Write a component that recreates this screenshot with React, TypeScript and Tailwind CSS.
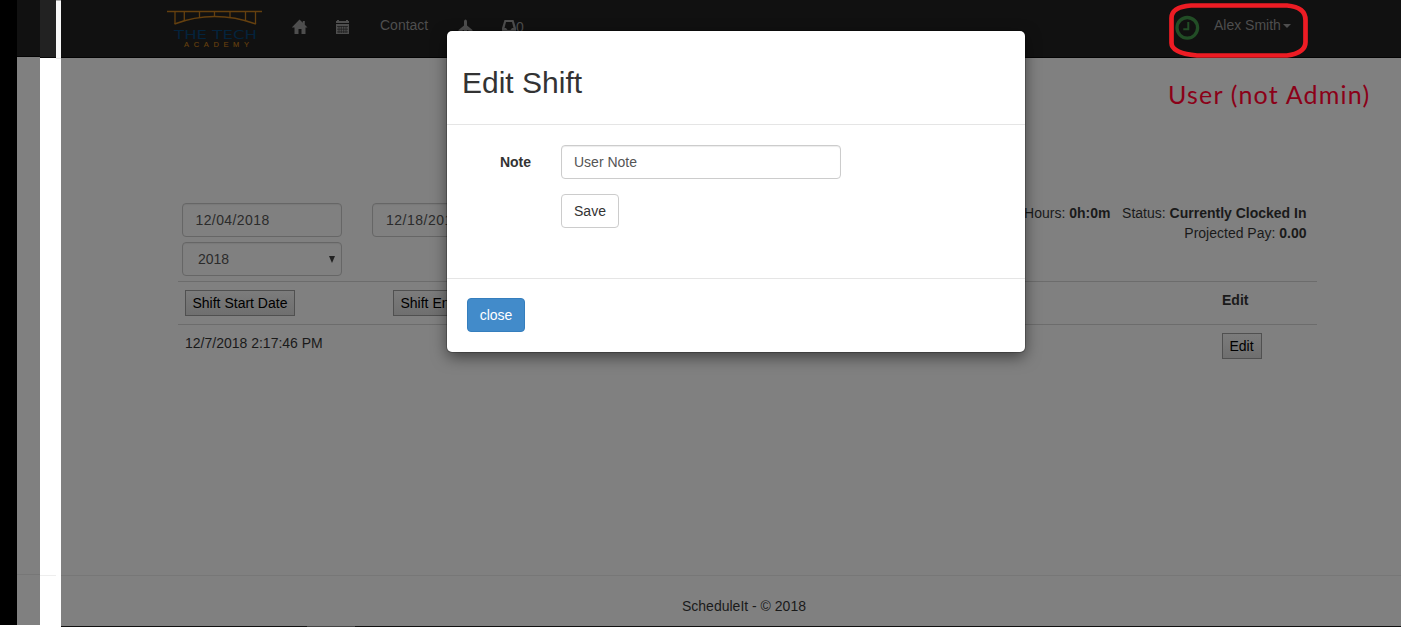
import React from "react";

function Logo() {
  return (
    <svg className="block h-[40px] w-[96px]" viewBox="0 0 96 40">
      <g fill="none" stroke="#65400f" strokeWidth="1.3">
        <path d="M0 3.500H95" strokeWidth="1.6" />
        <path d="M8 4v12M88.500 4v12M17.300 4v8.500M32.500 4v5.500M47.500 4v4.500M63 4v5.500M78.500 4v8.500" />
        <path d="M7.500 16Q47 1 89 16" strokeWidth="1.5" />
      </g>
      <text x="7" y="30.500" textLength="83" lengthAdjust="spacingAndGlyphs" fontFamily="DejaVu Sans, sans-serif" fontSize="13" fill="#04233c">THE TECH</text>
      <text x="17" y="39" textLength="65" fontFamily="Liberation Sans, sans-serif" fontSize="7.500" fill="#65400f" stroke="#65400f" strokeWidth=".15">ACADEMY</text>
    </svg>
  );
}

function HomeIcon() {
  return (
    <svg className="h-4 w-4" viewBox="0 0 16 16" fill="#4e4e4e">
      <path d="M7.500.5 10.800 3.800V2h2v3.800L15.500 8.500h-2V15H9.500v-5h-3v5H2.500V8.500H-.3z" />
    </svg>
  );
}

function CalendarIcon() {
  return (
    <svg className="h-4 w-4" viewBox="0 0 16 16">
      <path fill="#4e4e4e" d="M1 2h1V1h2v1h7V1h2v1h1v2H1zM1 5h13v10H1z" />
      <path stroke="#1b1b1b" strokeWidth=".7" d="M2 7.500h11M2 10.200h11M2 12.900h11M4 7v7M6.300 7v7M8.700 7v7M11 7v7" />
    </svg>
  );
}

function PlaneIcon() {
  return (
    <svg className="h-4 w-4" viewBox="0 0 16 16" fill="#4e4e4e">
      <path d="M6 6.500V2.500Q6.200.5 7.500.5T9 2.500v4l5.500 4.500v2.500L9 11v2.500l2.500 2h-8l2.500-2V11L.5 13.500V11z" />
    </svg>
  );
}

function InboxIcon() {
  return (
    <svg className="h-4 w-[14px]" viewBox="0 0 14 16" fill="#4e4e4e">
      <path fillRule="evenodd" d="M2.500 1h9L14 9v6H0V9zM4 3 2.500 9H4l1.500 2h3L10 9h1.500L10 3z" />
    </svg>
  );
}

function ClockIcon() {
  return (
    <svg className="h-[26px] w-[26px]" viewBox="0 0 26 26" fill="none" stroke="#224d26">
      <circle cx="13.300" cy="12.800" r="10.300" strokeWidth="3.300" />
      <path d="M14.300 7v7.200H9.300" strokeWidth="2" />
    </svg>
  );
}

function Navbar() {
  return (
    <header className="flex h-[58px] shrink-0 border-b border-[#040404] bg-[#111] pl-[106px] text-[#4e4e4e]">
      <div className="w-[125px] pt-2"><Logo /></div>
      <div className="w-[43px] pt-[19px]"><HomeIcon /></div>
      <div className="w-[45px] pt-[19px]"><CalendarIcon /></div>
      <div className="w-[78px] pt-[15px] leading-5">Contact</div>
      <div className="w-[44px] pt-[19px]"><PlaneIcon /></div>
      <div className="flex w-[672px] pt-[19px] leading-4"><InboxIcon />0</div>
      <div className="w-[40px] pt-[15px]"><ClockIcon /></div>
      <div className="flex pt-[15px] leading-5">
        Alex Smith
        <span className="mt-[9px] ml-[2px] h-0 w-0 border-x-4 border-t-4 border-x-transparent border-t-[#4e4e4e]" />
      </div>
    </header>
  );
}

const field = "flex h-[34px] w-[160px] items-center rounded border border-[#666] text-[#2b2b2b] shadow-[inset_0_1px_1px_rgba(0,0,0,0.06)]";
const gridButton = "h-[26px] border border-[#505050] bg-linear-to-b from-[#7c7c7c] to-[#6f6f6f] px-[6.5px] leading-6 text-black";

function Filters() {
  return (
    <section className="flex h-[78px] pl-1">
      <div className="flex w-[190px] flex-col gap-[5px]">
        <div className={field + " pl-[12.5px] tracking-[0.4px]"}>12/04/2018</div>
        <div className={field + " justify-between pr-[6px] pl-[15px]"}>
          <span>2018</span>
          <svg className="h-[7px] w-[6px]" viewBox="0 0 6 7"><path d="M0 0h6L3 7z" fill="#222" /></svg>
        </div>
      </div>
      <div className={field + " pl-[13px] tracking-[0.5px]"}>12/18/2018</div>
      <div className="ml-auto pr-[10.5px] text-right leading-5 text-[#1a1a1a]">
        <p>Hours: <b>0h:0m</b> &nbsp; Status: <b>Currently Clocked In</b></p>
        <p>Projected Pay: <b>0.00</b></p>
      </div>
    </section>
  );
}

function ShiftTable() {
  return (
    <section className="text-[#1a1a1a]">
      <div className="grid h-[43px] grid-cols-[208px_829px_1fr] border-t border-[#6c6c6c] pt-2 pl-[7px]">
        <div className={gridButton + " w-[110px]"}>Shift Start Date</div>
        <div className={gridButton + " w-[106px]"}>Shift End Date</div>
        <b className="leading-5">Edit</b>
      </div>
      <div className="grid grid-cols-[1037px_1fr] border-t border-[#6c6c6c] pt-2 pl-[7px]">
        <span className="leading-5">12/7/2018 2:17:46 PM</span>
        <div className={gridButton + " w-[40px]"}>Edit</div>
      </div>
    </section>
  );
}

function ShiftModal() {
  return (
    <div className="absolute top-[31px] left-[447px] flex h-[321px] w-[578px] flex-col rounded-[5px] bg-white text-[#333] shadow-[0_5px_15px_rgba(0,0,0,0.5),0_0_0_1px_rgba(0,0,0,0.2)]">
      <h2 className="h-[94px] border-b border-[#e5e5e5] pt-[35px] pl-[15px] text-[30px] leading-[33px]">Edit Shift</h2>
      <div className="flex h-[154px] border-b border-[#e5e5e5] pt-5">
        <label className="w-[114px] pr-[30px] text-right leading-[34px] font-bold">Note</label>
        <div className="flex flex-col gap-[15px]">
          <input className="h-[34px] w-[280px] rounded border border-[#ccc] px-3 text-[#555] shadow-[inset_0_1px_1px_rgba(0,0,0,0.075)]" defaultValue="User Note" />
          <button className="h-[34px] w-[58px] rounded border border-[#ccc]">Save</button>
        </div>
      </div>
      <button className="mt-[19px] ml-5 h-[34px] w-[58px] rounded border border-[#357ebd] bg-[#428bca] text-white">close</button>
    </div>
  );
}

function LeftEdge() {
  return (
    <aside className="flex w-[61px] shrink-0 bg-white">
      <div className="h-[625px] w-[17px] bg-black" />
      <div className="flex h-[625px] w-[23px] flex-col bg-[#808080]">
        <div className="h-[57px] border-b border-[#040404] bg-[#111]" />
        <div className="mt-[517px] h-px bg-[#777]" />
      </div>
      <div className="w-4">
        <div className="h-[58px] border-b border-[#080808] bg-[#222]" />
        <div className="mt-[517px] h-px bg-[#eee]" />
      </div>
      <div className="h-[59px] w-[5px] border-t border-b border-t-[#b0b0b0] border-b-[#e7e7e7] bg-[#f8f8f8]" />
    </aside>
  );
}

export default function App() {
  return (
    <div className="relative flex h-[627px] w-[1401px] overflow-hidden bg-[#808080] font-['Liberation_Sans',Arial,sans-serif] text-[14px]">
      <LeftEdge />
      <div className="flex w-[1340px] flex-col">
        <Navbar />
        <main className="h-[517px] w-[1256px] pt-[145px] pl-[117px]">
          <Filters />
          <ShiftTable />
        </main>
        <footer className="h-[51px] border-t border-[#777] pt-5 pl-[621px] leading-5 text-[#1a1a1a]">ScheduleIt - © 2018</footer>
        <div className="flex h-px bg-[#111]"><span className="ml-[246px] w-12 bg-[#444]" /></div>
      </div>
      <svg className="absolute top-0 left-[1165px] h-[62px] w-[148px]" viewBox="0 0 148 62" fill="none">
        <path d="M26 5.500H122Q140.500 7 140.500 20V42Q140.500 53 122 55.500H32Q6.500 53 6.500 43V18Q6.500 7 26 5.500Z" stroke="#ed1c24" strokeWidth="4.700" />
      </svg>
      <p className="absolute top-[77px] left-[1168px] font-['Lato',sans-serif] text-[25px] leading-[34px] tracking-[1.2px] whitespace-nowrap text-[#8b0018]">User (not Admin)</p>
      <ShiftModal />
    </div>
  );
}
